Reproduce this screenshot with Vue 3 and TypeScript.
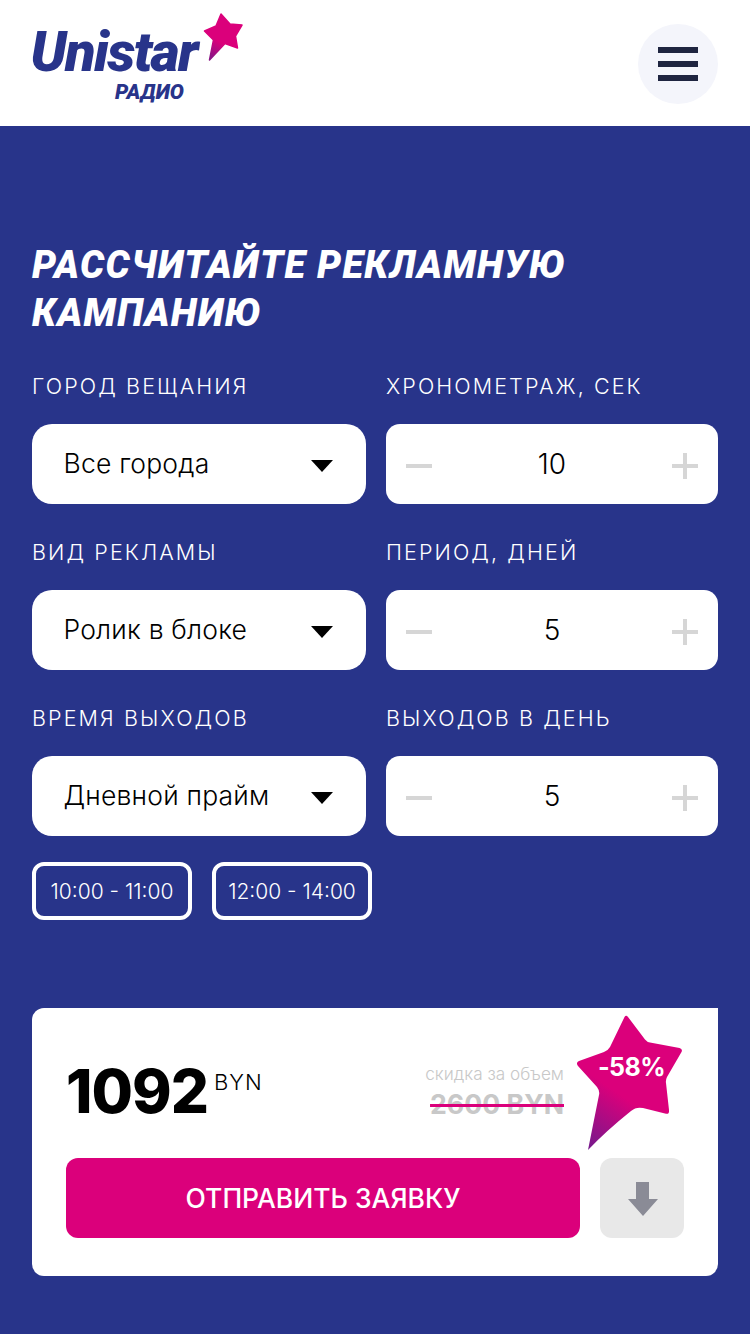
<script setup lang="ts">
interface Row { label: string; select: string; stepLabel: string; value: number }
const rows: Row[] = [
  { label: 'ГОРОД ВЕЩАНИЯ', select: 'Все города', stepLabel: 'ХРОНОМЕТРАЖ, СЕК', value: 10 },
  { label: 'ВИД РЕКЛАМЫ', select: 'Ролик в блоке', stepLabel: 'ПЕРИОД, ДНЕЙ', value: 5 },
  { label: 'ВРЕМЯ ВЫХОДОВ', select: 'Дневной прайм', stepLabel: 'ВЫХОДОВ В ДЕНЬ', value: 5 },
]
const chips = ['10:00 - 11:00', '12:00 - 14:00']
</script>

<template>
  <div class="page">
    <header class="header">
      <div class="logo">
        <div class="logo-name">Unistar</div>
        <div class="logo-sub">РАДИО</div>
        <svg class="logo-star" width="40" height="48" viewBox="0 0 40 48">
          <defs>
            <linearGradient id="ls" x1="0.3" y1="1" x2="0.6" y2="0.4">
              <stop offset="0" stop-color="#8a1585" />
              <stop offset="0.6" stop-color="#db007b" />
            </linearGradient>
          </defs>
          <path d="M18 1 L27 11 L39 12 L32.500 23 L34.500 35 L22 30.500 L6.500 47 L10.500 27 L1.500 18 L13 13 Z" fill="url(#ls)" stroke="url(#ls)" stroke-width="1.500" stroke-linejoin="round" />
        </svg>
      </div>
      <button class="burger" aria-label="Меню"><span></span><span></span><span></span></button>
    </header>

    <main class="main">
      <h1 class="title">РАССЧИТАЙТЕ РЕКЛАМНУЮ<br />КАМПАНИЮ</h1>

      <div class="form">
        <template v-for="r in rows" :key="r.label">
          <div class="field">
            <div class="label">{{ r.label }}</div>
            <div class="control select">
              <span class="select-text">{{ r.select }}</span>
              <i class="caret"></i>
            </div>
          </div>
          <div class="field">
            <div class="label">{{ r.stepLabel }}</div>
            <div class="control stepper">
              <i class="minus"></i>
              <span class="value">{{ r.value }}</span>
              <i class="plus"></i>
            </div>
          </div>
        </template>
      </div>

      <div class="chips">
        <div v-for="c in chips" :key="c" class="chip">{{ c }}</div>
      </div>

      <section class="card">
        <div class="prices">
          <div class="price">
            <span class="amount">1092</span>
            <span class="currency">BYN</span>
          </div>
          <div class="old">
            <div class="old-note">скидка за объем</div>
            <div class="old-price">2600 BYN</div>
          </div>
        </div>
        <div class="actions">
          <button class="send">ОТПРАВИТЬ ЗАЯВКУ</button>
          <button class="download" aria-label="Скачать">
            <svg width="30" height="34" viewBox="0 0 30 34">
              <path d="M8 0 H21 V17 H30 L15 34 L0 17 H8 Z" fill="#8a8b96" />
            </svg>
          </button>
        </div>
        <div class="badge">
          <svg width="110" height="136" viewBox="0 0 110 136">
            <defs>
              <linearGradient id="bs" x1="0.12" y1="1" x2="0.36" y2="0.56">
                <stop offset="0" stop-color="#74198c" />
                <stop offset="1" stop-color="#db007b" />
              </linearGradient>
            </defs>
            <path d="M48.500 2 Q50 -0.500 52 2 L69 24.500 Q71 27 74 27.500 L103.500 33 Q107 34 105.500 37 L91 62 Q89.500 65 90 68 L93 95 Q93.500 100 89 98.500 L67 93 Q60 91.500 55 96 Q30 116 12 135 L23 80 Q24 76 21 72 L2 51 Q-0.500 47.500 3 46 L28 37 Q32 35.500 34 32 Z" fill="url(#bs)" />
          </svg>
          <span class="badge-text">-58%</span>
        </div>
      </section>
    </main>
  </div>
</template>

<style scoped>
.page {
  width: 750px;
  height: 1334px;
  overflow: hidden;
  background: #28348a;
  font-family: "Inter", "Open Sans", sans-serif;
  color: #000;
}
.header {
  height: 126px;
  background: #fff;
  display: flex;
  justify-content: space-between;
  align-items: flex-start;
  padding: 24px 32px 0;
  box-sizing: border-box;
}
.logo {
  position: relative;
  width: 200px;
  color: #28348a;
  font-family: "Roboto", "Open Sans", sans-serif;
  font-style: italic;
  font-weight: 900;
}
.logo-name {
  font-size: 56px;
  line-height: 56px;
  letter-spacing: -1.600px;
  margin-left: -1.500px;
  white-space: nowrap;
}
.logo-sub {
  font-size: 21px;
  line-height: 24px;
  margin-left: 83px;
}
.logo-star {
  position: absolute;
  left: 171px;
  top: -11px;
}
.burger {
  width: 80px;
  height: 80px;
  border: 0;
  padding: 0;
  border-radius: 50%;
  background: #f4f5fb;
  display: flex;
  flex-direction: column;
  justify-content: center;
  align-items: center;
  gap: 8px;
}
.burger span {
  width: 40px;
  height: 6px;
  background: #1f2540;
}
.main {
  padding: 115px 32px 0;
}
.title {
  margin: 0;
  color: #fff;
  font-family: "Roboto", sans-serif;
  font-style: italic;
  font-weight: 900;
  font-size: 38px;
  line-height: 48px;
  letter-spacing: 1.300px;
  white-space: nowrap;
}
.form {
  display: grid;
  grid-template-columns: 334px 332px;
  column-gap: 20px;
  row-gap: 31px;
  margin-top: 32px;
}
.label {
  color: #fff;
  font-size: 21.500px;
  font-weight: 350;
  line-height: 34px;
  letter-spacing: 2.100px;
  margin-bottom: 21px;
  white-space: nowrap;
}
.control {
  height: 80px;
  background: #fff;
  display: flex;
  align-items: center;
  box-sizing: border-box;
  font-weight: 300;
}
.select {
  border-radius: 20px;
  padding: 0 33px 0 32px;
  justify-content: space-between;
}
.select-text {
  font-size: 26.500px;
  letter-spacing: 0.200px;
  margin-top: -2px;
  margin-left: -0.500px;
}
.caret {
  width: 0;
  height: 0;
  border-left: 11px solid transparent;
  border-right: 11px solid transparent;
  border-top: 12px solid #000;
  margin-top: 4px;
}
.stepper {
  border-radius: 14px;
  padding: 0 20px;
  justify-content: space-between;
}
.value {
  font-size: 28px;
}
.minus,
.plus {
  position: relative;
  width: 26px;
  height: 26px;
  display: block;
  margin-top: 3px;
}
.minus::before,
.plus::before,
.plus::after {
  content: "";
  position: absolute;
  background: #d6d6d6;
}
.minus::before,
.plus::before {
  left: 0;
  right: 0;
  top: 11px;
  height: 4px;
}
.plus::after {
  top: 0;
  bottom: 0;
  left: 11px;
  width: 4px;
}
.chips {
  display: flex;
  gap: 20px;
  margin-top: 26px;
}
.chip {
  width: 160px;
  height: 58px;
  box-sizing: border-box;
  border: 4px solid #fff;
  border-radius: 12px;
  color: #fff;
  font-size: 21px;
  font-weight: 350;
  display: flex;
  align-items: center;
  justify-content: center;
  white-space: nowrap;
}
.card {
  position: relative;
  margin-top: 88px;
  height: 268px;
  background: #fff;
  border-radius: 12px 0 12px 12px;
  padding: 0 34px;
  box-sizing: border-box;
}
.prices {
  height: 150px;
  display: flex;
  justify-content: space-between;
  align-items: flex-start;
}
.price {
  display: flex;
  align-items: flex-start;
  padding-top: 41px;
}
.amount {
  font-size: 60px;
  line-height: 84px;
  font-weight: 800;
  letter-spacing: -1px;
}
.currency {
  font-size: 22px;
  font-weight: 300;
  line-height: 30px;
  letter-spacing: 1px;
  margin-left: 6px;
  margin-top: 18px;
}
.old {
  margin-top: 54px;
  margin-right: 120px;
  text-align: right;
  color: #c8c8c8;
}
.old-note {
  font-size: 17.200px;
  font-weight: 300;
  line-height: 24px;
  white-space: nowrap;
}
.old-price {
  font-size: 26.700px;
  line-height: 36px;
  font-weight: 700;
  text-decoration: line-through;
  text-decoration-color: #db007b;
  text-decoration-thickness: 3px;
  white-space: nowrap;
}
.actions {
  display: flex;
  gap: 20px;
}
.send {
  width: 514px;
  height: 80px;
  border: 0;
  border-radius: 12px;
  background: #db007b;
  color: #fff;
  font-family: inherit;
  font-size: 26.500px;
  font-weight: 500;
  padding: 0;
}
.download {
  width: 84px;
  height: 80px;
  border: 0;
  border-radius: 12px;
  background: #e8e8e8;
  display: flex;
  align-items: center;
  justify-content: center;
  padding: 2px 0 0 2px;
}
.badge {
  position: absolute;
  left: 544px;
  top: 7px;
  width: 110px;
  height: 136px;
}
.badge svg {
  display: block;
}
.badge-text {
  position: absolute;
  left: 22px;
  top: 36px;
  color: #fff;
  font-size: 25px;
  line-height: 32px;
  font-weight: 700;
  letter-spacing: -0.600px;
  white-space: nowrap;
}
</style>
